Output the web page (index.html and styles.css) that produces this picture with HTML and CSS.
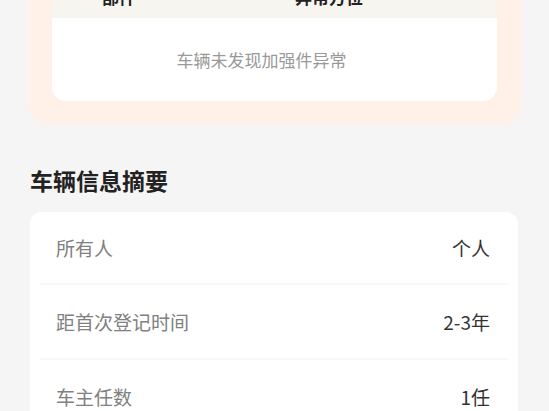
FILE: index.html
```html
<!DOCTYPE html>
<html lang="zh-CN">
<head>
    <meta charset="UTF-8">
    <meta name="viewport" content="width=device-width, initial-scale=1.0">
    <title>车辆报告</title>
    <link rel="stylesheet" href="styles.css">
</head>
<body>
    <div class="page">
        <div class="inspect">
            <div class="inspect-table">
                <div class="thead">
                    <div>部件</div>
                    <div>异常方位</div>
                </div>
                <div class="empty">车辆未发现加强件异常</div>
            </div>
        </div>

        <div class="section-title">车辆信息摘要</div>
        <div class="info-card">
            <div class="info-row">
                <span class="label">所有人</span>
                <span class="value">个人</span>
            </div>
            <div class="info-row">
                <span class="label">距首次登记时间</span>
                <span class="value">2-3年</span>
            </div>
            <div class="info-row">
                <span class="label">车主任数</span>
                <span class="value">1任</span>
            </div>
        </div>

        <!-- faint watermark over the page -->
        <span class="mark mark-a">信息</span>
        <span class="mark mark-b">信息</span>
        <span class="mark mark-c">信</span>
    </div>
</body>
</html>
```

FILE: styles.css
```css
body {
    margin: 0;
    background-color: #f5f5f5;
    font-family: "Noto Sans CJK SC", "Noto Sans", sans-serif;
}
.page {
    position: relative;
    padding-bottom: 20px;
}
.inspect {
    margin: -26px 29px 0 30px;
    padding: 0 23px 22px 22px;
    background-color: #fff0e8;
    border-radius: 0 0 20px 20px;
    box-shadow: 0 0 6px 2px #fff2ec;
}
.inspect-table {
    background-color: #fff;
    border-radius: 0 0 14px 14px;
    overflow: hidden;
}
.thead {
    display: grid;
    grid-template-columns: 193px 1fr;
    height: 44px;
    align-items: center;
    padding-left: 50px;
    background-color: #f7f5f0;
    font-size: 17px;
    font-weight: bold;
    color: #222;
}
.empty {
    height: 83px;
    line-height: 83px;
    padding-right: 26px;
    text-align: center;
    font-size: 17px;
    color: #999;
}
.section-title {
    margin: 33px 30px 0;
    height: 48px;
    line-height: 48px;
    font-size: 23px;
    font-weight: bold;
    color: #222;
}
.info-card {
    margin: 8px 31px 0 30px;
    background-color: #fff;
    border-radius: 12px;
}
.info-row {
    display: flex;
    justify-content: space-between;
    align-items: center;
    height: 73px;
    margin: 0 10px;
    padding: 0 18px 0 16px;
    border-bottom: 2px solid #f8f8f8;
    font-size: 19px;
}
.info-row:first-child {
    height: 71px;
}
.label {
    color: #808080;
}
.value {
    color: #333;
}
.mark {
    position: absolute;
    font-size: 30px;
    font-weight: bold;
    color: rgba(0, 0, 0, 0.025);
    transform: rotate(-20deg);
}
.mark-a { left: 80px; top: 180px; }
.mark-b { left: 260px; top: 240px; }
.mark-c { left: 500px; top: 200px; }
```
